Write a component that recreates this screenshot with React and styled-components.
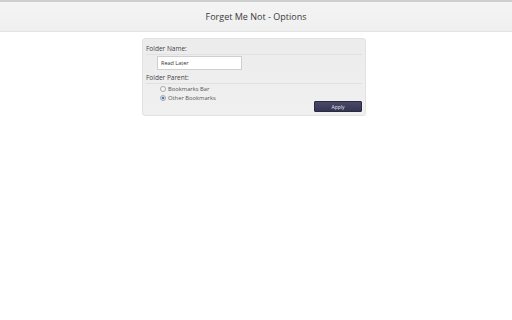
import React, { useState } from "react";
import styled, { createGlobalStyle } from "styled-components";

const GlobalStyle = createGlobalStyle`
  html, body {
    margin: 0;
    padding: 0;
    background: #ffffff;
    font-family: "Open Sans", "Noto Sans", sans-serif;
    color: #333333;
  }
`;

const Header = styled.header`
  height: 29px;
  border-top: 2px solid #cfcfcf;
  border-bottom: 1px solid #e4e4e4;
  background: linear-gradient(#f4f4f4, #efefef);
  display: flex;
  align-items: center;
  justify-content: center;
  font-size: 9px;
  color: #3a3a3a;
`;

const Page = styled.main`
  display: flex;
  justify-content: center;
  padding: 6px 4px 0 0;
`;

const Panel = styled.section`
  width: 224px;
  box-sizing: border-box;
  padding: 6px 3px 3px 3px;
  border-radius: 3px;
  border: 1px solid #e2e2e2;
  background: linear-gradient(#ececec, #f0f0f0);
  display: flex;
  flex-direction: column;
`;

const Label = styled.div`
  font-size: 6.5px;
  line-height: 8px;
  color: #444444;
  padding-bottom: 1px;
  border-bottom: 1px solid #e0e0e0;
  margin-top: ${props => props.gap || 0}px;
`;

const Field = styled.input`
  margin: 1px 0 0 11px;
  width: 85px;
  height: 14px;
  box-sizing: border-box;
  border: 1px solid #cfcfcf;
  background: #ffffff;
  padding: 0 3px;
  font-family: inherit;
  font-size: 5.5px;
  color: #333333;
  outline: none;
`;

const Options = styled.div`
  display: flex;
  flex-direction: column;
  gap: 1px;
  margin: 1px 0 0 14px;
`;

const Option = styled.label`
  display: flex;
  align-items: center;
  gap: 2px;
  height: 8px;
  font-size: 5.8px;
  color: #555555;
`;

const Dot = styled.span`
  width: 4px;
  height: 4px;
  border-radius: 50%;
  border: 0.5px solid #a8a8a8;
  background: ${props =>
    props.checked
      ? "radial-gradient(circle, #3f7fbf 0 1.2px, #cfe0f0 1.6px)"
      : "#f7f7f7"};
`;

const Footer = styled.div`
  display: flex;
  justify-content: flex-end;
  margin-top: -1px;
`;

const Button = styled.button`
  width: 48px;
  height: 11px;
  border: 1px solid #2b2a44;
  border-radius: 1px;
  background: linear-gradient(#4a4868, #353452);
  color: #e8e8ee;
  font-family: inherit;
  font-size: 5px;
  padding: 0;
`;

const choices = ["Bookmarks Bar", "Other Bookmarks"];

export default function App() {
  const [parent, setParent] = useState("Other Bookmarks");
  return (
    <>
      <GlobalStyle />
      <Header>Forget Me Not - Options</Header>
      <Page>
        <Panel>
          <Label>Folder Name:</Label>
          <Field defaultValue="Read Later" />
          <Label gap={4}>Folder Parent:</Label>
          <Options>
            {choices.map(choice => (
              <Option key={choice} onClick={() => setParent(choice)}>
                <Dot checked={parent === choice} />
                {choice}
              </Option>
            ))}
          </Options>
          <Footer>
            <Button>Apply</Button>
          </Footer>
        </Panel>
      </Page>
    </>
  );
}
